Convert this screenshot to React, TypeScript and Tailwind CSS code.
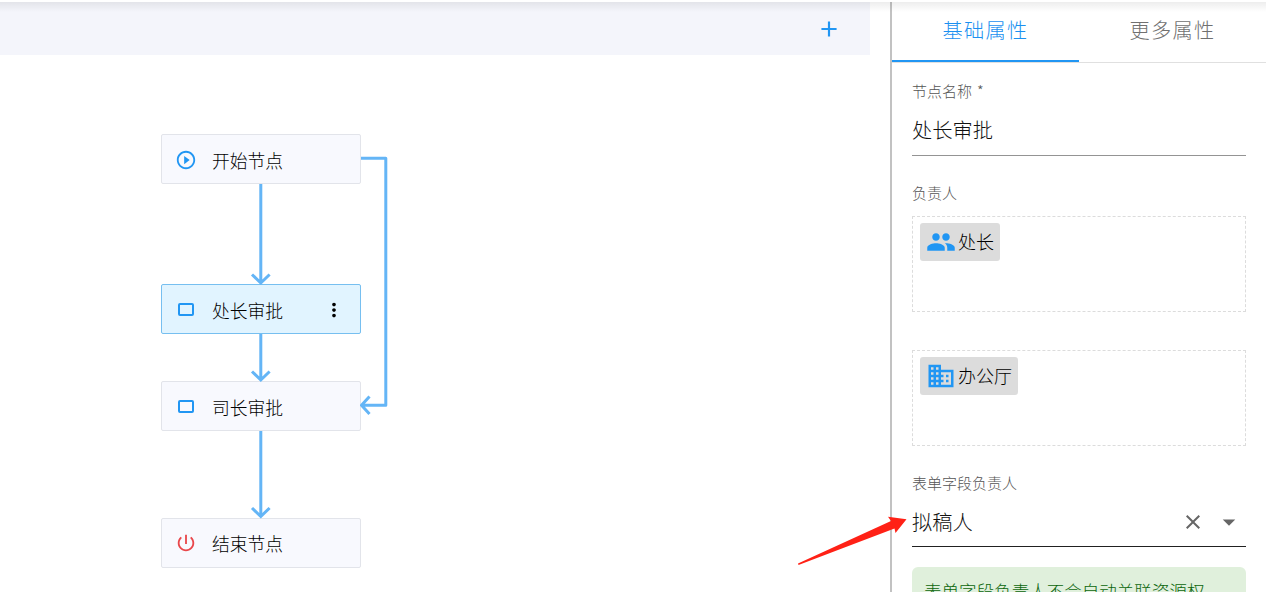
import type { ReactNode } from "react";
import { MdBusiness, MdGroup, MdMoreVert, MdArrowDropDown, MdClose, MdAdd } from "react-icons/md";

function PlayIcon() {
  return (
    <svg viewBox="0 0 24 24" className="size-[22px] text-[#2196f3]" fill="currentColor">
      <path d="M10 16.5l6-4.5-6-4.5v9zM12 2C6.480 2 2 6.480 2 12s4.480 10 10 10 10-4.480 10-10S17.520 2 12 2zm0 18c-4.410 0-8-3.590-8-8s3.590-8 8-8 8 3.590 8 8-3.590 8-8 8z" />
    </svg>
  );
}

function RectIcon() {
  return <span className="mx-[3px] h-[13px] w-4 rounded-[2px] border-2 border-[#2196f3]" />;
}

function PowerIcon() {
  return (
    <svg viewBox="0 0 24 24" className="size-[22px] text-[#e9474b]" fill="currentColor">
      <path d="M13 3h-2v10h2V3zm4.830 2.170l-1.420 1.420C17.990 7.860 19 9.810 19 12c0 3.870-3.130 7-7 7s-7-3.130-7-7c0-2.190 1.010-4.140 2.580-5.420L6.170 5.170C4.230 6.820 3 9.260 3 12c0 4.970 4.030 9 9 9s9-4.030 9-9c0-2.740-1.230-5.180-3.170-6.830z" />
    </svg>
  );
}

interface NodeProps {
  top: string;
  label: string;
  icon: ReactNode;
  selected?: boolean;
}

function FlowNode({ top, label, icon, selected }: NodeProps) {
  const tone = selected ? "border-[#76bff0] bg-[#e1f4ff]" : "border-[#e2e4ea] bg-[#f8f9fe]";
  return (
    <div
      className={`absolute left-[161px] flex h-[50px] w-[200px] items-center rounded-[2px] border px-[13px] pt-px ${top} ${tone}`}
    >
      <span className="flex w-[22px] items-center justify-center">{icon}</span>
      <span className="ml-[15px] flex-1 text-[17.800px] leading-6 text-black">{label}</span>
      {selected && <MdMoreVert className="mr-[2px] size-[22px] text-black" />}
    </div>
  );
}

function Connectors() {
  return (
    <svg className="absolute left-0 top-0 h-[537px] w-[870px]" fill="none" stroke="#64b5f6" strokeWidth="3">
      <path d="M260.800 129V228M252 219.500L260.800 228L269.600 219.500" />
      <path d="M260.800 279V325M252 316.500L260.800 325L269.600 316.500" />
      <path d="M260.800 376V462M252 453L260.800 461.500L269.600 453" />
      <path d="M361 103.200H385.800V350.300H362M369.500 341.500L361.500 350.300L369.500 359" strokeLinejoin="round" />
    </svg>
  );
}

function Tag({ icon, label }: { icon: ReactNode; label: string }) {
  return (
    <span className="inline-flex h-[38px] items-center rounded-[3px] bg-[#dcdcdc] pl-1.5 pr-[5.500px] text-[18px] text-black">
      {icon}
      <span className="-mt-px ml-0.5">{label}</span>
    </span>
  );
}

export default function App() {
  return (
    <div className="relative flex h-[592px] w-[1266px] overflow-hidden bg-white font-['Noto_Sans_CJK_SC',sans-serif] font-light">
      <main className="w-[870px] shrink-0">
        <header className="flex h-[55px] items-center justify-end bg-[#f4f5fb] pr-7 pt-[2px]">
          <MdAdd className="size-[26px] text-[#2196f3]" />
        </header>
        <section className="relative h-[537px]">
          <FlowNode top="top-[79px]" label="开始节点" icon={<PlayIcon />} />
          <FlowNode top="top-[229px]" label="处长审批" icon={<RectIcon />} selected />
          <FlowNode top="top-[326px]" label="司长审批" icon={<RectIcon />} />
          <FlowNode top="top-[462.500px]" label="结束节点" icon={<PowerIcon />} />
          <Connectors />
        </section>
      </main>

      <aside className="ml-5 flex h-full w-[376px] flex-col border-l-2 border-[#c2c2c2]">
        <nav className="flex h-[63px] shrink-0 border-b border-[#e0e0e0] text-[20.200px] tracking-[1.300px]">
          <button className="h-[62px] w-[187px] border-b-2 border-[#2196f3] pt-px text-[#1b90f0]">基础属性</button>
          <button className="h-[62px] w-[187px] border-b-2 border-transparent pt-px text-[#707070]">更多属性</button>
        </nav>
        <div className="flex flex-col px-5 pt-[18px] text-[#111]">
          <label className="text-[15px] leading-5 text-[#555]">
            节点名称<span className="ml-[5px]">*</span>
          </label>
          <div className="flex h-[55px] items-center border-b border-[#949494] pt-[5px] text-[20.250px]">处长审批</div>
          <label className="mt-[27px] text-[15px] leading-5 text-[#555]">负责人</label>
          <div className="mt-[13px] h-24 border border-dashed border-[#dcdcdc] px-[7px] py-1.5">
            <Tag icon={<MdGroup className="size-[30px] text-[#2196f3]" />} label="处长" />
          </div>
          <div className="mt-[38px] h-24 border border-dashed border-[#dcdcdc] px-[7px] py-1.5">
            <Tag icon={<MdBusiness className="size-[30px] text-[#2196f3]" />} label="办公厅" />
          </div>
          <label className="mt-[27px] text-[15px] leading-5 text-[#555]">表单字段负责人</label>
          <div className="flex h-[54px] items-center border-b border-[#212121] pt-[5px] text-[20.250px]">
            <span className="flex-1">拟稿人</span>
            <MdClose className="size-6 text-[#666]" />
            <MdArrowDropDown className="ml-[9px] mr-0.5 size-[30px] text-[#666]" />
          </div>
          <div className="mt-5 h-[70px] shrink-0 rounded-[6px] bg-[#e0f0dc] px-3 pt-[11px] text-[17.550px] leading-[26px] text-[#0b660b]">
            表单字段负责人不会自动关联资源权
          </div>
        </div>
      </aside>

      <div className="absolute inset-x-0 top-0 h-0.5 bg-white" />
      <div className="absolute inset-x-0 top-0.5 h-2.5 bg-gradient-to-b from-black/7 to-transparent" />
      <svg className="absolute left-[796px] top-[514px] h-[54px] w-[114px]" viewBox="796 514 114 54">
        <path d="M798 563.500L891 521L888 516.800L906.500 519.300L895.500 533L894.500 528.500L798.500 565Z" fill="#ff2116" />
      </svg>
    </div>
  );
}
